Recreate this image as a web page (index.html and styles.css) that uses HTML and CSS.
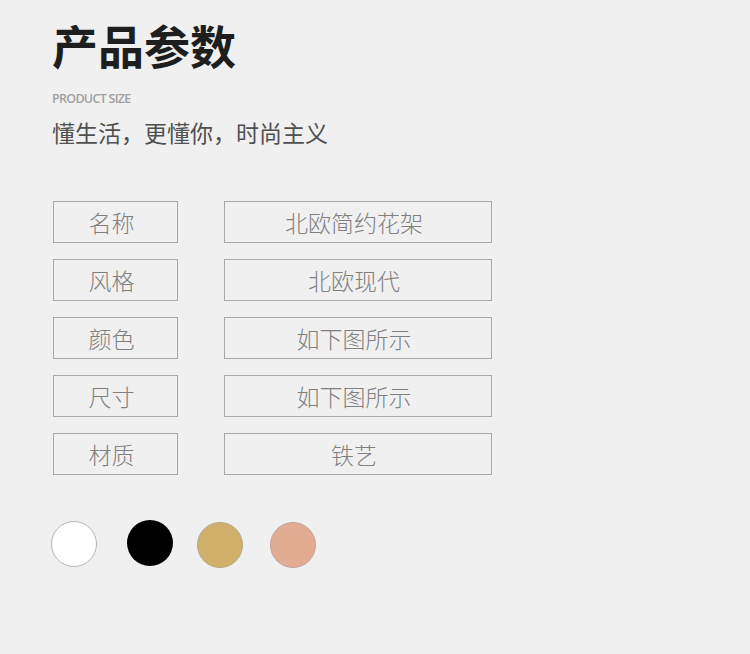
FILE: index.html
```html
<!DOCTYPE html>
<html lang="zh">
<head>
<meta charset="utf-8">
<link rel="stylesheet" href="styles.css">
</head>
<body>
<div class="page">
  <h1 class="title">产品参数</h1>
  <div class="en">PRODUCT SIZE</div>
  <div class="sub">懂生活，更懂你，时尚主义</div>
  <div class="table">
    <div class="row"><div class="cell k">名称</div><div class="cell v">北欧简约花架</div></div>
    <div class="row"><div class="cell k">风格</div><div class="cell v">北欧现代</div></div>
    <div class="row"><div class="cell k">颜色</div><div class="cell v">如下图所示</div></div>
    <div class="row"><div class="cell k">尺寸</div><div class="cell v">如下图所示</div></div>
    <div class="row"><div class="cell k">材质</div><div class="cell v">铁艺</div></div>
  </div>
  <div class="swatches">
    <span class="dot white"></span>
    <span class="dot black"></span>
    <span class="dot gold"></span>
    <span class="dot pink"></span>
  </div>
</div>
</body>
</html>
```
FILE: styles.css
```css
html, body {
  margin: 0;
  padding: 0;
  background: #f0f0f0;
}
body {
  width: 750px;
  height: 654px;
  overflow: hidden;
  font-family: "Noto Sans CJK SC", "Noto Sans", sans-serif;
}
.page {
  padding: 15px 0 0 52px;
}
.title {
  margin: 0;
  font-size: 46px;
  line-height: 58px;
  font-weight: 700;
  color: #1e1e1e;
}
.en {
  margin-top: 18px;
  font-family: "Open Sans", "Noto Sans", sans-serif;
  font-size: 12.5px;
  line-height: 16px;
  font-weight: 600;
  color: #a0a0a0;
  letter-spacing: -0.7px;
}
.sub {
  margin-top: 10px;
  font-size: 23px;
  line-height: 30px;
  color: #505050;
}
.table {
  margin-top: 54px;
  display: flex;
  flex-direction: column;
  gap: 16px;
}
.row {
  display: flex;
  gap: 46px;
  margin-left: 1px;
}
.cell {
  box-sizing: border-box;
  height: 42px;
  border: 1.5px solid #a8a8a8;
  display: flex;
  align-items: center;
  justify-content: center;
  font-size: 23px;
  font-weight: 300;
  color: #808080;
  padding-right: 8px;
}
.k { width: 125px; }
.v { width: 268px; }
.swatches {
  margin-top: 44px;
  display: flex;
  align-items: center;
  gap: 27px;
  margin-left: -1px;
}
.dot {
  box-sizing: border-box;
  width: 46px;
  height: 46px;
  border-radius: 50%;
  display: block;
}
.white { background: #fff; border: 1.5px solid #b4b4b4; }
.black { background: #000; margin-left: 3px; margin-top: -2px; }
.gold { background: #cfaf69; border: 1.5px solid #b8a888; margin-left: -3px; margin-top: 3px; }
.pink { background: #e2ac92; border: 1.5px solid #bfa29a; margin-top: 3px; }
```
